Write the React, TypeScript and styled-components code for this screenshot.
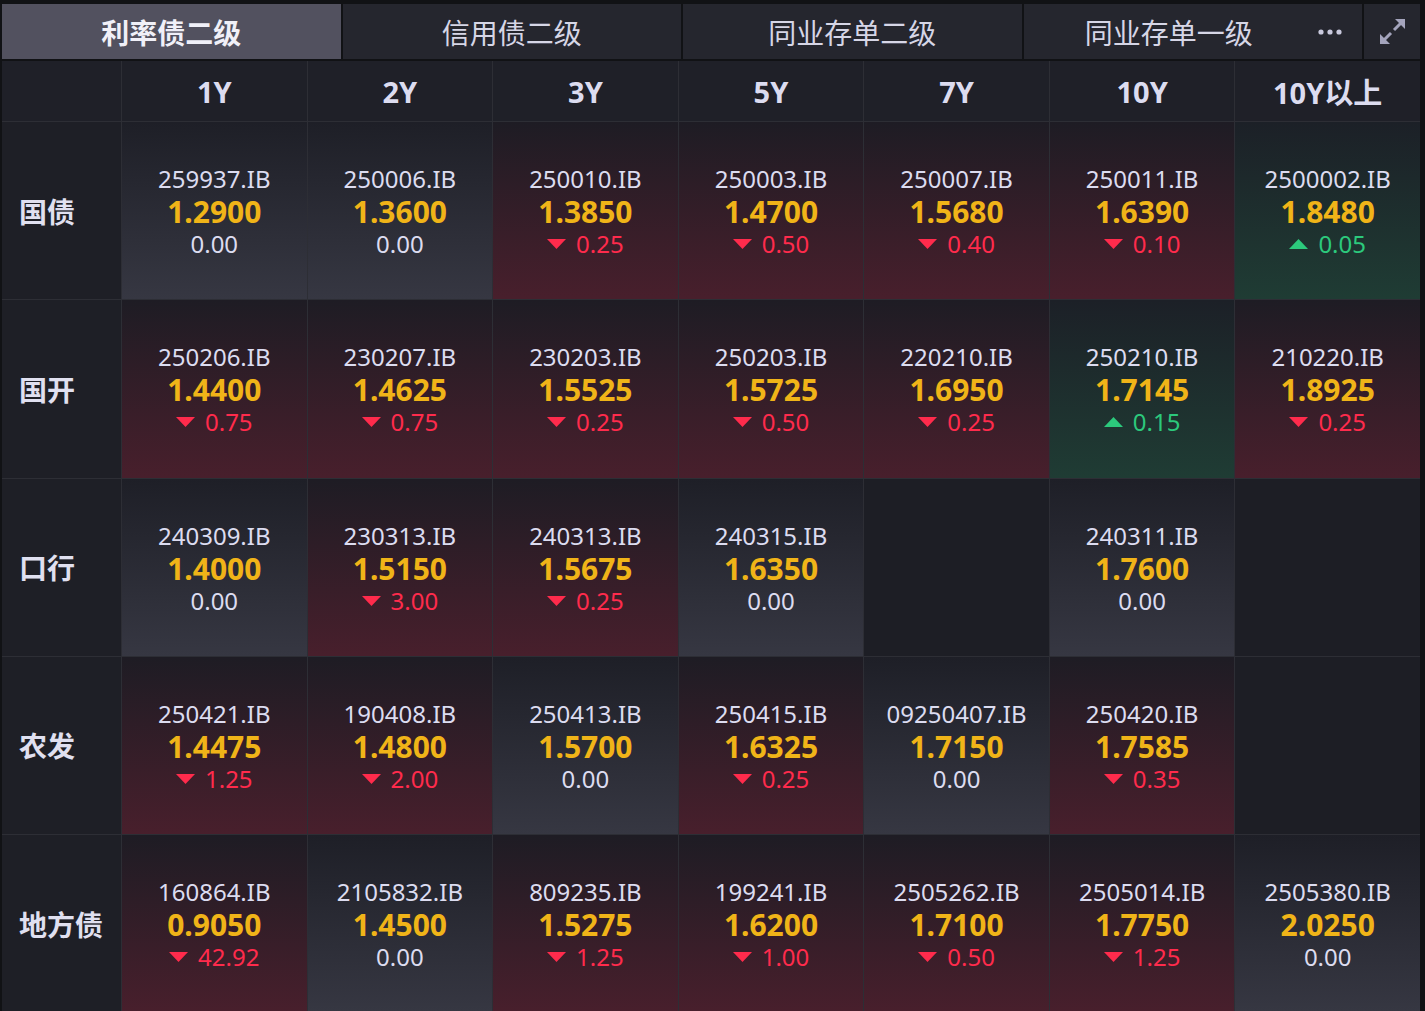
import React from "react";
import styled, { createGlobalStyle, css } from "styled-components";

const GlobalStyle = createGlobalStyle`
  html, body {
    margin: 0;
    padding: 0;
    background: #111215;
    overflow: hidden;
  }
  body {
    font-family: "Noto Sans", "Noto Sans CJK SC", sans-serif;
  }
`;

type Trend = "up" | "down" | "flat";
type Quote = { code: string; rate: string; change: string; trend: Trend } | null;

const tenors = ["1Y", "2Y", "3Y", "5Y", "7Y", "10Y", "10Y以上"];

const q = (code: string, rate: string, change: string, trend: Trend): Quote => ({
  code,
  rate,
  change,
  trend,
});

const rows: { label: string; cells: Quote[] }[] = [
  {
    label: "国债",
    cells: [
      q("259937.IB", "1.2900", "0.00", "flat"),
      q("250006.IB", "1.3600", "0.00", "flat"),
      q("250010.IB", "1.3850", "0.25", "down"),
      q("250003.IB", "1.4700", "0.50", "down"),
      q("250007.IB", "1.5680", "0.40", "down"),
      q("250011.IB", "1.6390", "0.10", "down"),
      q("2500002.IB", "1.8480", "0.05", "up"),
    ],
  },
  {
    label: "国开",
    cells: [
      q("250206.IB", "1.4400", "0.75", "down"),
      q("230207.IB", "1.4625", "0.75", "down"),
      q("230203.IB", "1.5525", "0.25", "down"),
      q("250203.IB", "1.5725", "0.50", "down"),
      q("220210.IB", "1.6950", "0.25", "down"),
      q("250210.IB", "1.7145", "0.15", "up"),
      q("210220.IB", "1.8925", "0.25", "down"),
    ],
  },
  {
    label: "口行",
    cells: [
      q("240309.IB", "1.4000", "0.00", "flat"),
      q("230313.IB", "1.5150", "3.00", "down"),
      q("240313.IB", "1.5675", "0.25", "down"),
      q("240315.IB", "1.6350", "0.00", "flat"),
      null,
      q("240311.IB", "1.7600", "0.00", "flat"),
      null,
    ],
  },
  {
    label: "农发",
    cells: [
      q("250421.IB", "1.4475", "1.25", "down"),
      q("190408.IB", "1.4800", "2.00", "down"),
      q("250413.IB", "1.5700", "0.00", "flat"),
      q("250415.IB", "1.6325", "0.25", "down"),
      q("09250407.IB", "1.7150", "0.00", "flat"),
      q("250420.IB", "1.7585", "0.35", "down"),
      null,
    ],
  },
  {
    label: "地方债",
    cells: [
      q("160864.IB", "0.9050", "42.92", "down"),
      q("2105832.IB", "1.4500", "0.00", "flat"),
      q("809235.IB", "1.5275", "1.25", "down"),
      q("199241.IB", "1.6200", "1.00", "down"),
      q("2505262.IB", "1.7100", "0.50", "down"),
      q("2505014.IB", "1.7750", "1.25", "down"),
      q("2505380.IB", "2.0250", "0.00", "flat"),
    ],
  },
];

const tabs = ["利率债二级", "信用债二级", "同业存单二级", "同业存单一级"];

const Page = styled.div`
  height: 1011px;
  padding: 4px 5px 0 2px;
  box-sizing: border-box;
  display: flex;
  flex-direction: column;
  gap: 2px;
`;

const TabBar = styled.div`
  display: grid;
  grid-template-columns: repeat(4, 1fr) 56px;
  gap: 2px;
  height: 55px;
  flex-shrink: 0;
`;

const Tab = styled.div<{ $active?: boolean; $withMore?: boolean }>`
  position: relative;
  display: flex;
  align-items: center;
  justify-content: center;
  box-sizing: border-box;
  padding-right: ${(p) => (p.$withMore ? "48px" : "0")};
  font-family: "Noto Sans CJK SC", "Noto Sans", sans-serif;
  font-size: 28px;
  color: #d6d6e6;
  background: #25262e;
  ${(p) =>
    p.$active &&
    css`
      background: #52515f;
      color: #f0f0f8;
      font-weight: 700;
    `}
`;

const MoreDots = styled.svg`
  position: absolute;
  right: 20px;
  top: 50%;
  transform: translateY(-50%);
`;

const ExpandButton = styled.div`
  display: flex;
  align-items: center;
  justify-content: center;
  background: #25262e;
`;

const Grid = styled.div`
  flex: 1;
  display: grid;
  grid-template-columns: 119px repeat(7, 1fr);
  grid-template-rows: 60px repeat(5, 177.25px);
  gap: 1px;
  background: #2d2e35;
  overflow: hidden;
`;

const HeaderCell = styled.div`
  background: #1f2028;
  display: flex;
  align-items: center;
  justify-content: center;
  font-size: 29px;
  font-weight: 700;
  color: #dcdcf0;
  font-family: "Noto Sans", "Noto Sans CJK SC", sans-serif;
`;

const Corner = styled.div`
  background: #1f2028;
`;

const RowLabel = styled.div`
  background: #1e1f26;
  display: flex;
  align-items: center;
  padding-left: 17px;
  font-family: "Noto Sans CJK SC", "Noto Sans", sans-serif;
  font-size: 28px;
  font-weight: 700;
  color: #e0e0f0;
`;

const cellBg: Record<Trend | "empty", string> = {
  flat: "linear-gradient(180deg, #1e1f27 0%, #363742 100%)",
  down: "linear-gradient(180deg, #1e1c24 0%, #481f2c 100%)",
  up: "linear-gradient(180deg, #1c2027 0%, #1f3c34 100%)",
  empty: "#1d1e25",
};

const Cell = styled.div<{ $tone: Trend | "empty" }>`
  background: ${(p) => cellBg[p.$tone]};
  display: flex;
  flex-direction: column;
  align-items: center;
  justify-content: center;
  padding-top: 1px;
`;

const Code = styled.div`
  font-size: 24px;
  line-height: 33px;
  color: #dcdcf0;
`;

const Rate = styled.div`
  font-size: 30px;
  font-weight: 700;
  line-height: 33px;
  color: #f0b418;
`;

const changeColor: Record<Trend, string> = {
  up: "#2cc97c",
  down: "#ff2b4c",
  flat: "#dcdcf0",
};

const Change = styled.div<{ $trend: Trend }>`
  display: flex;
  align-items: center;
  gap: 10px;
  font-size: 24px;
  line-height: 32px;
  color: ${(p) => changeColor[p.$trend]};
`;

const Arrow = styled.svg`
  display: block;
`;

function Triangle({ trend }: { trend: Trend }) {
  if (trend === "flat") return null;
  return (
    <Arrow width="19" height="10" viewBox="0 0 19 10">
      {trend === "down" ? (
        <polygon points="0,0 19,0 9.5,10" fill={changeColor.down} />
      ) : (
        <polygon points="0,10 19,10 9.5,0" fill={changeColor.up} />
      )}
    </Arrow>
  );
}

function QuoteCell({ quote }: { quote: Quote }) {
  if (!quote) return <Cell $tone="empty" />;
  return (
    <Cell $tone={quote.trend}>
      <Code>{quote.code}</Code>
      <Rate>{quote.rate}</Rate>
      <Change $trend={quote.trend}>
        <Triangle trend={quote.trend} />
        <span>{quote.change}</span>
      </Change>
    </Cell>
  );
}

export default function App() {
  return (
    <>
      <GlobalStyle />
      <Page>
        <TabBar>
          {tabs.map((t, i) => {
            const last = i === tabs.length - 1;
            return (
              <Tab key={t} $active={i === 0} $withMore={last}>
                {t}
                {last && (
                  <MoreDots width="24" height="6" viewBox="0 0 24 6">
                    <circle cx="3" cy="3" r="2.6" fill="#c8c8dc" />
                    <circle cx="12" cy="3" r="2.6" fill="#c8c8dc" />
                    <circle cx="21" cy="3" r="2.6" fill="#c8c8dc" />
                  </MoreDots>
                )}
              </Tab>
            );
          })}
          <ExpandButton>
            <svg width="27" height="27" viewBox="0 0 27 27">
              <polygon points="16,1 26,1 26,11" fill="#a4a4bc" />
              <line x1="22" y1="5" x2="15" y2="12" stroke="#a4a4bc" strokeWidth="3" />
              <polygon points="1,16 1,26 11,26" fill="#a4a4bc" />
              <line x1="5" y1="22" x2="12" y2="15" stroke="#a4a4bc" strokeWidth="3" />
            </svg>
          </ExpandButton>
        </TabBar>
        <Grid>
          <Corner />
          {tenors.map((t) => (
            <HeaderCell key={t}>{t}</HeaderCell>
          ))}
          {rows.map((r) => (
            <React.Fragment key={r.label}>
              <RowLabel>{r.label}</RowLabel>
              {r.cells.map((c, i) => (
                <QuoteCell key={i} quote={c} />
              ))}
            </React.Fragment>
          ))}
        </Grid>
      </Page>
    </>
  );
}
